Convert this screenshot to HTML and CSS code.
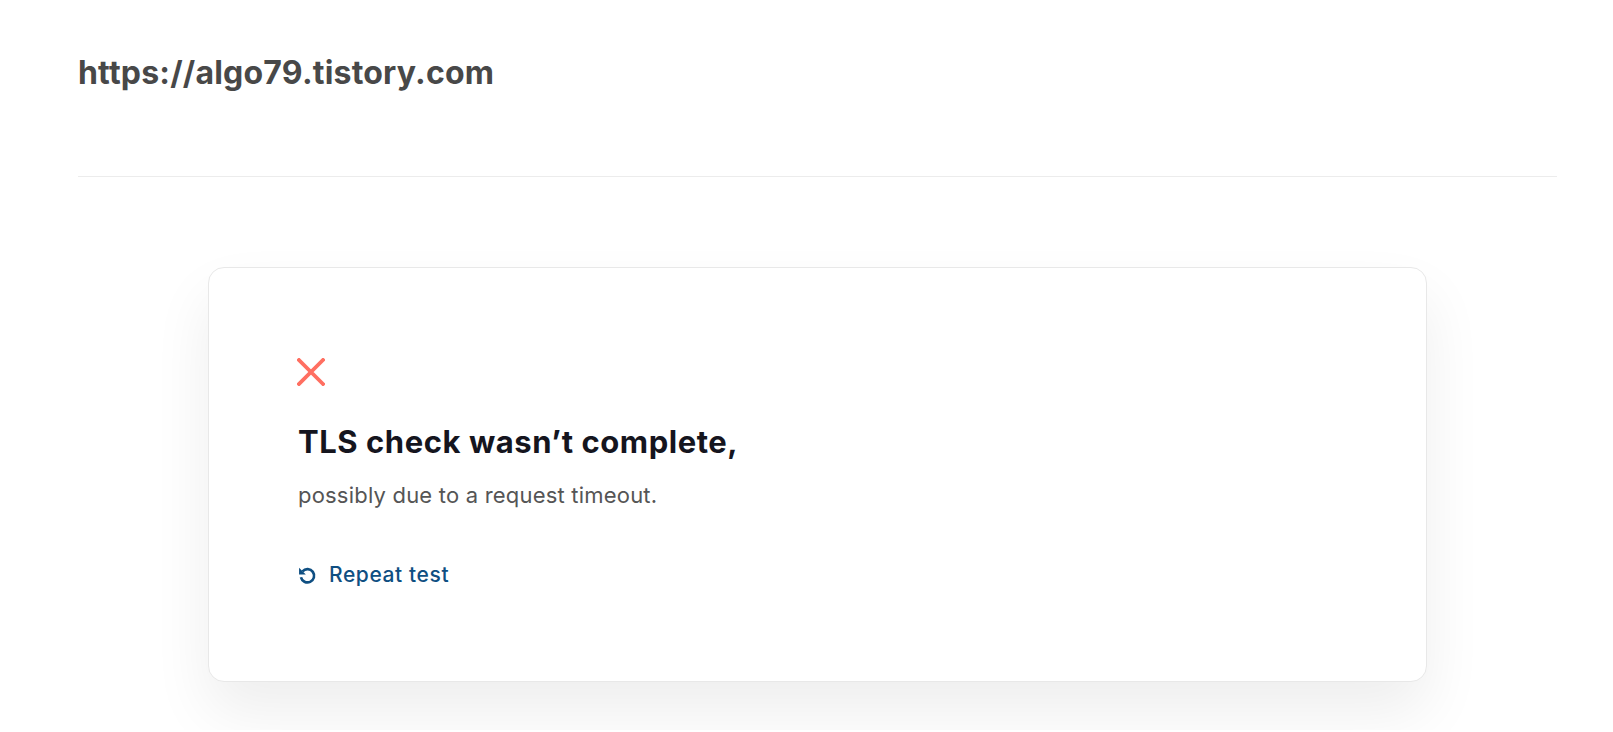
FILE: index.html
```html
<!DOCTYPE html>
<html>
<head>
<meta charset="utf-8">
<link rel="stylesheet" href="styles.css">
</head>
<body>
<div class="page">
  <header class="header">
    <h1 class="site">https://algo79.tistory.com</h1>
  </header>
  <hr class="divider">
  <section class="card">
    <svg class="x-icon" width="28" height="28" viewBox="0 0 28 28"><path d="M2 2 L26 26 M26 2 L2 26" stroke="#ff6f61" stroke-width="3.8" stroke-linecap="square" fill="none"/></svg>
    <h2 class="title">TLS check wasn’t complete,</h2>
    <p class="sub">possibly due to a request timeout.</p>
    <a class="repeat" href="#">
      <svg width="19" height="19" viewBox="0 0 18 18"><path d="M4.3 5 A6.3 6.3 0 1 1 2.8 10.6" stroke="#0f4f82" stroke-width="2.5" fill="none"/><path d="M1 1.6 L1 8 L7.4 8 Z" fill="#0f4f82"/></svg>
      <span>Repeat test</span>
    </a>
  </section>
</div>
</body>
</html>
```
FILE: styles.css
```css
html, body { margin: 0; padding: 0; background: #ffffff; }
body { font-family: Inter, "Noto Sans", sans-serif; }
.page { padding: 0 56px 48px 78px; }
.header { height: 176px; box-sizing: border-box; padding-top: 53px; }
.site { margin: 0; font-size: 32px; font-weight: 700; color: #484848; letter-spacing: 0.2px; line-height: 40px; }
.divider { margin: 0; border: 0; border-top: 1px solid #ececec; height: 0; }
.card {
  margin: 90px auto 0;
  width: 1219px;
  box-sizing: border-box;
  border: 1px solid #e8e8e8;
  border-radius: 16px;
  background: #fff;
  box-shadow: 0 30px 60px rgba(0,0,0,0.07);
  padding: 90px 90px 92px 89px;
  display: flex;
  flex-direction: column;
  align-items: flex-start;
}
.x-icon { display: block; margin-left: -1px; }
.title { margin: 36px 0 0; font-size: 31px; font-weight: 700; color: #15151e; letter-spacing: 0.55px; line-height: 40px; }
.sub { margin: 18px 0 0; font-size: 22px; color: #555555; letter-spacing: 0.2px; line-height: 30px; }
.repeat { margin-top: 51px; display: flex; align-items: center; gap: 12px; text-decoration: none; color: #0f4f82; font-size: 21px; font-weight: 500; letter-spacing: 0.6px; line-height: 28px; }
.repeat svg { display: block; }
```
